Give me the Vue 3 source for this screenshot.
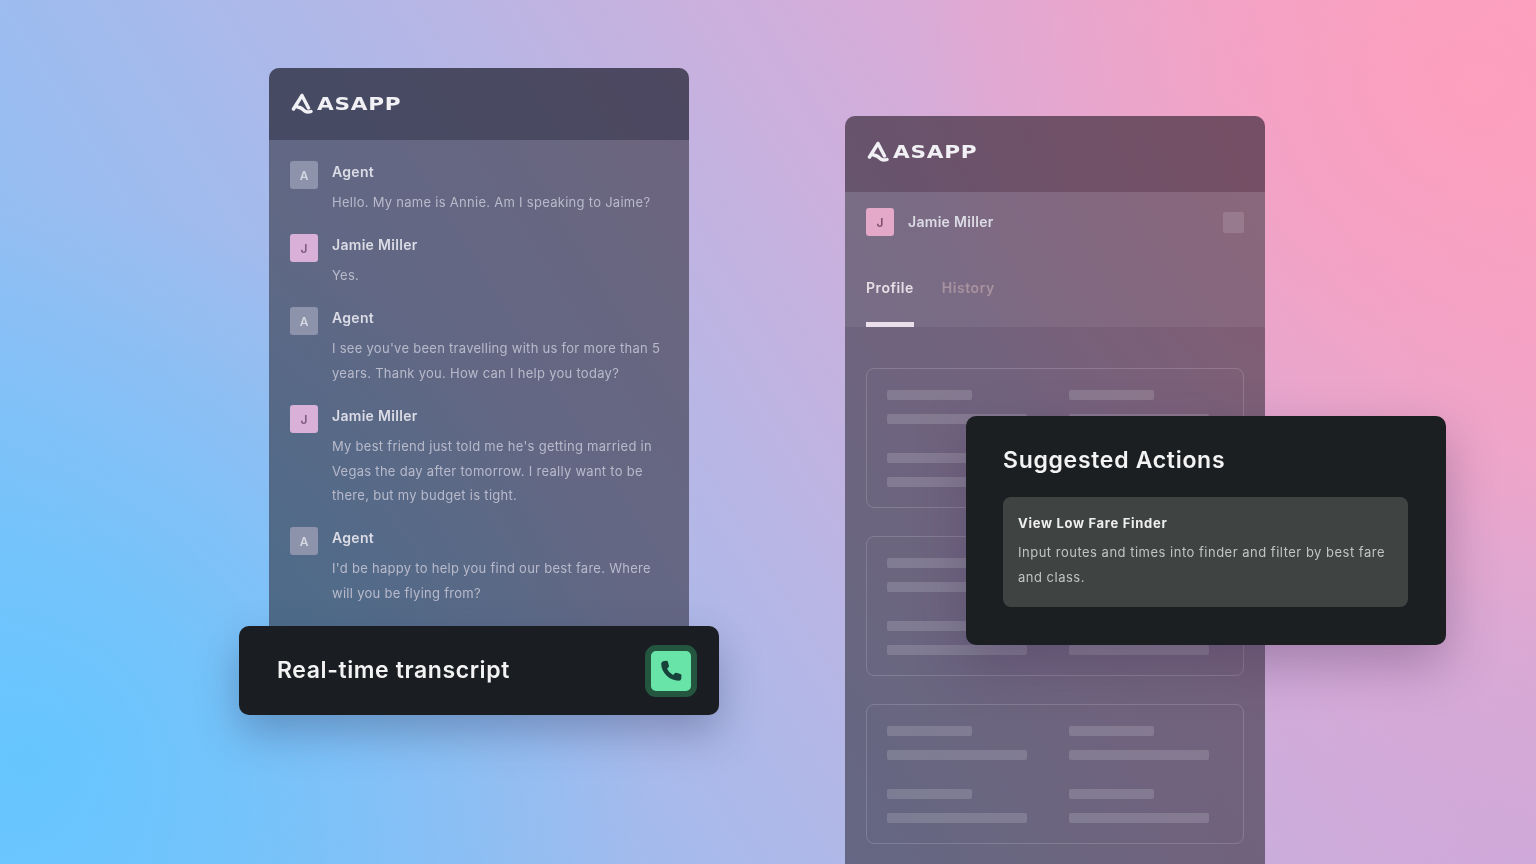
<script setup>
const messages = [
  { id: 1, who: 'Agent', initial: 'A', lines: ['Hello. My name is Annie. Am I speaking to Jaime?'] },
  { id: 2, who: 'Jamie Miller', initial: 'J', lines: ['Yes.'] },
  { id: 3, who: 'Agent', initial: 'A', lines: ["I see you've been travelling with us for more than 5", 'years. Thank you. How can I help you today?'] },
  { id: 4, who: 'Jamie Miller', initial: 'J', lines: ['My best friend just told me he\'s getting married in', 'Vegas the day after tomorrow. I really want to be', 'there, but my budget is tight.'] },
  { id: 5, who: 'Agent', initial: 'A', lines: ["I'd be happy to help you find our best fare. Where", 'will you be flying from?'] }
]
const cards = [1, 2, 3]
</script>

<template>
  <div class="stage">
    <section class="panel panel-left">
      <header class="brand">
        <svg class="mark" viewBox="0 0 22 22" width="22" height="22">
          <path d="M11 2.5 L2.5 16 M11 2.5 L17.5 15 M6.5 14 Q10.5 14.5 13 17.5 Q15.5 20 20 18.5" fill="none" stroke="#f1f0f4" stroke-width="3.4" stroke-linecap="round" stroke-linejoin="round" />
        </svg>
        <span class="wordmark">ASAPP</span>
      </header>
      <div class="chat">
        <div v-for="m in messages" :key="m.id" class="msg">
          <div class="avatar" :class="m.initial === 'J' ? 'pink' : 'grey'">{{ m.initial }}</div>
          <div class="msg-body">
            <div class="who">{{ m.who }}</div>
            <div v-for="line in m.lines" :key="line" class="line">{{ line }}</div>
          </div>
        </div>
      </div>
    </section>

    <section class="panel panel-right">
      <header class="brand brand-right">
        <svg class="mark" viewBox="0 0 22 22" width="22" height="22">
          <path d="M11 2.5 L2.5 16 M11 2.5 L17.5 15 M6.5 14 Q10.5 14.5 13 17.5 Q15.5 20 20 18.5" fill="none" stroke="#f1f0f4" stroke-width="3.4" stroke-linecap="round" stroke-linejoin="round" />
        </svg>
        <span class="wordmark">ASAPP</span>
      </header>
      <div class="profile-head">
        <div class="user-row">
          <div class="avatar pink strong">J</div>
          <div class="who user-name">Jamie Miller</div>
          <div class="square"></div>
        </div>
        <nav class="tabs">
          <span class="tab active">Profile</span>
          <span class="tab">History</span>
        </nav>
      </div>
      <div class="cards">
        <div v-for="c in cards" :key="c" class="card">
          <div v-for="n in 2" :key="n" class="card-col">
            <div class="bar short"></div>
            <div class="bar long"></div>
            <div class="bar short spaced"></div>
            <div class="bar long"></div>
          </div>
        </div>
      </div>
    </section>

    <div class="transcript">
      <span class="transcript-label">Real-time transcript</span>
      <div class="call">
        <svg viewBox="0 0 24 24" width="28" height="28">
          <path d="M6.4 3.4 L8.2 3.2 Q9.2 3.2 9.4 4.2 L10.2 7.4 Q10.4 8.2 9.8 8.8 L8.6 10 Q10.2 13.6 13.8 15.4 L15.2 14 Q15.8 13.4 16.6 13.6 L20 14.6 Q21 14.9 21 15.8 L20.8 18.4 Q20.6 20.4 18.6 20.4 C10.6 20.2 3.8 13.4 3.6 6 Q3.6 3.8 6.4 3.4 Z" fill="#17423a" />
        </svg>
      </div>
    </div>

    <div class="suggested">
      <h2 class="suggested-title">Suggested Actions</h2>
      <div class="action">
        <div class="action-title">View Low Fare Finder</div>
        <p class="action-text">Input routes and times into finder and filter by best fare and class.</p>
      </div>
    </div>
  </div>
</template>

<style>
html,
body {
  margin: 0;
  overflow: hidden;
}
</style>

<style scoped>
.stage {
  position: relative;
  width: 1536px;
  height: 864px;
  overflow: hidden;
  font-family: Inter, "Liberation Sans", sans-serif;
  background:
    radial-gradient(560px 520px at 1470px 90px, rgba(255, 158, 188, 0.85), rgba(255, 158, 188, 0)),
    radial-gradient(620px 560px at 30px 760px, rgba(100, 198, 255, 0.9), rgba(100, 198, 255, 0)),
    radial-gradient(500px 400px at 1536px 864px, rgba(200, 168, 218, 0.7), rgba(200, 168, 218, 0)),
    linear-gradient(58deg, #7cc2fb 0%, #b5b7e6 45%, #dcaad6 72%, #f7a4c4 100%);
}

.panel {
  position: absolute;
  width: 420px;
  border-radius: 10px 10px 0 0;
  overflow: hidden;
  background: rgba(38, 36, 48, 0.55);
  filter: blur(0.45px);
}

.panel-left {
  left: 269px;
  top: 68px;
  height: 562px;
}

.panel-right {
  left: 845px;
  top: 116px;
  height: 748px;
}

.brand {
  display: flex;
  align-items: center;
  gap: 4px;
  height: 72px;
  padding-left: 22px;
  box-sizing: border-box;
  background: rgba(30, 30, 52, 0.4);
}

.brand-right {
  height: 76px;
  padding-bottom: 4px;
  background: rgba(70, 30, 50, 0.22);
}

.wordmark {
  color: #f1f0f4;
  font-family: "DejaVu Sans", sans-serif;
  font-size: 18px;
  font-weight: 700;
  letter-spacing: 0.6px;
  line-height: 22px;
  transform: scaleX(1.2);
  transform-origin: left center;
}

.chat {
  padding: 21px 21px 0;
}

.msg {
  display: flex;
  gap: 14px;
  margin-bottom: 19.7px;
}

.avatar {
  flex: none;
  width: 28px;
  height: 28px;
  border-radius: 3px;
  display: flex;
  align-items: center;
  justify-content: center;
  font-size: 12px;
  font-weight: 600;
}

.avatar.grey {
  background: #8d93ab;
  color: #d5d8e2;
}

.avatar.pink {
  background: #d9b1d8;
  color: #7b5a82;
}

.avatar.strong {
  background: #e4a9c8;
  color: #80506d;
}

.who {
  color: #dcdce6;
  font-size: 14px;
  font-weight: 600;
  letter-spacing: 0.3px;
  line-height: 21px;
  margin-bottom: 8px;
}

.line {
  color: #b8bacb;
  font-size: 13px;
  letter-spacing: 0.28px;
  line-height: 24.5px;
  white-space: nowrap;
}

.profile-head {
  height: 135px;
  box-sizing: border-box;
  padding: 16px 21px 0;
  background: rgba(255, 255, 255, 0.06);
}

.user-row {
  display: flex;
  align-items: center;
  gap: 14px;
}

.user-name {
  margin: 0;
  padding-bottom: 2px;
  flex: 1;
}

.square {
  width: 21px;
  height: 21px;
  border-radius: 2px;
  background: rgba(255, 255, 255, 0.13);
}

.tabs {
  display: flex;
  gap: 28px;
  margin-top: 29px;
}

.tab {
  position: relative;
  color: #a8929f;
  font-size: 14px;
  font-weight: 600;
  letter-spacing: 0.55px;
  line-height: 46px;
  height: 62px;
  box-sizing: border-box;
}

.tab.active {
  color: #e6dfe6;
}

.tab.active::after {
  content: "";
  position: absolute;
  left: 0;
  right: 0;
  bottom: 0;
  height: 5px;
  background: #ecdfec;
}

.cards {
  display: flex;
  flex-direction: column;
  gap: 28.5px;
  padding: 41px 21px 0;
}

.card {
  display: flex;
  height: 139.5px;
  box-sizing: border-box;
  padding: 21px 20px;
  border: 1.5px solid rgba(255, 255, 255, 0.16);
  border-radius: 8px;
}

.card-col {
  flex: none;
  width: 182px;
}

.bar {
  height: 10px;
  border-radius: 2px;
  background: rgba(255, 255, 255, 0.15);
  margin-bottom: 14px;
}

.bar.short {
  width: 85px;
}

.bar.long {
  width: 140px;
}

.bar.spaced {
  margin-top: 29px;
}

.transcript {
  position: absolute;
  left: 239px;
  top: 626px;
  width: 480px;
  height: 89px;
  box-sizing: border-box;
  padding: 0 22px 0 38px;
  display: flex;
  align-items: center;
  justify-content: space-between;
  background: #1a1d22;
  border-radius: 10px;
  box-shadow: 0 18px 40px rgba(50, 60, 100, 0.35);
}

.transcript-label {
  color: #f3f3f3;
  font-size: 23px;
  font-weight: 600;
  letter-spacing: 0.6px;
  padding-bottom: 2px;
  filter: blur(0.4px);
}

.call {
  width: 40px;
  height: 40px;
  display: flex;
  align-items: center;
  justify-content: center;
  background: #68e4a8;
  border: 6px solid #24553f;
  border-radius: 11px;
  filter: blur(0.7px);
}

.suggested {
  position: absolute;
  left: 966px;
  top: 416px;
  width: 480px;
  height: 229px;
  box-sizing: border-box;
  padding: 0 38px 0 37px;
  background: #1b1f22;
  border-radius: 10px;
  box-shadow: 0 20px 50px rgba(70, 50, 90, 0.35);
}

.suggested-title {
  margin: 0;
  padding-top: 29px;
  color: #f3f3f3;
  font-size: 23px;
  font-weight: 600;
  letter-spacing: 0.7px;
  line-height: 30px;
  filter: blur(0.4px);
}

.action {
  margin-top: 22px;
  height: 110px;
  box-sizing: border-box;
  padding: 15px 15px 0;
  background: #3f4342;
  border-radius: 8px;
}

.action-title {
  color: #efefef;
  font-size: 13px;
  font-weight: 700;
  letter-spacing: 0.7px;
  line-height: 22px;
  filter: blur(0.4px);
}

.action-text {
  margin: 6px 0 0;
  color: #c2c4c3;
  font-size: 13px;
  letter-spacing: 0.5px;
  line-height: 24.5px;
  filter: blur(0.4px);
}
</style>
